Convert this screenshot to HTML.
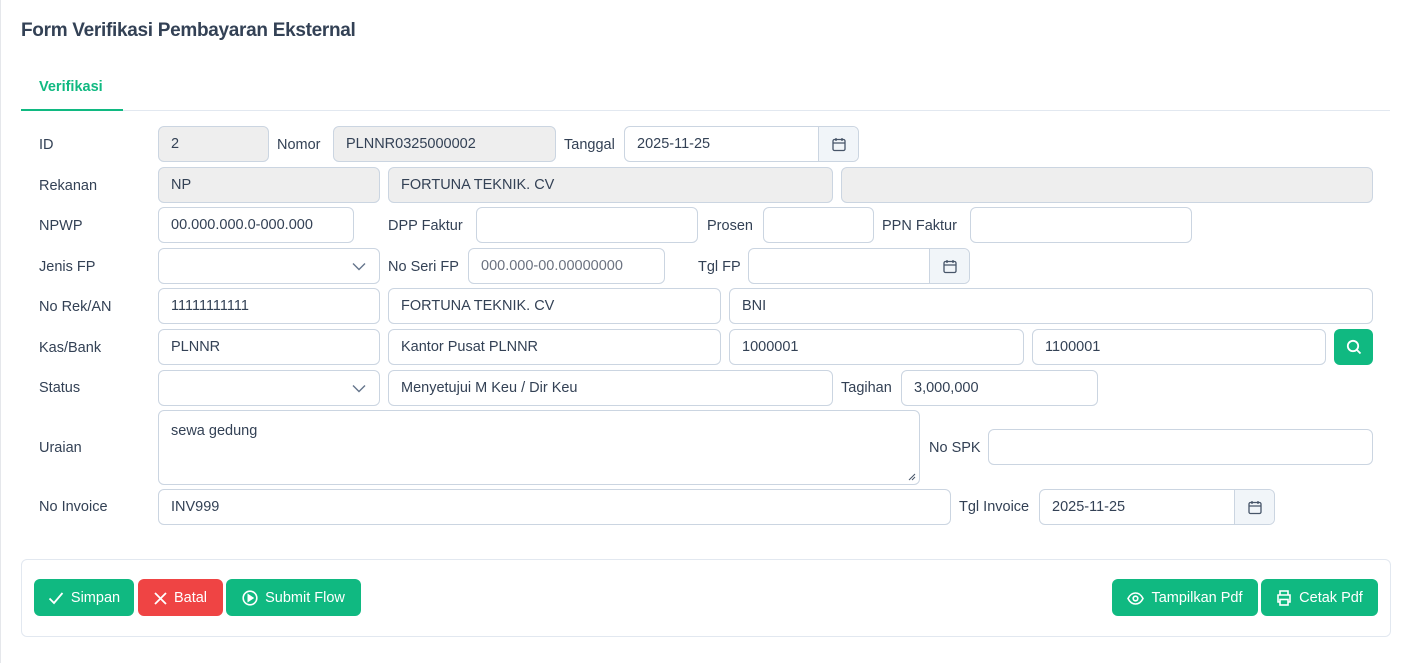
<!DOCTYPE html>
<html><head><meta charset="utf-8"><style>
*{box-sizing:border-box;margin:0;padding:0}
body{width:1401px;height:663px;background:#fff;font-family:"Liberation Sans",sans-serif;color:#334155;font-size:14.5px;position:relative;overflow:hidden}
.a{position:absolute}
.t{position:absolute;white-space:nowrap;line-height:20px}
.i{position:absolute;height:36px;border:1px solid #cbd5e1;border-radius:6px;background:#fff;padding:0 12px;line-height:35px;white-space:nowrap;color:#334155}
.d{background:#eeeeee}
.ph{color:#6b7280}
.btnc{position:absolute;top:0;right:0;width:40px;height:34px;border-left:1px solid #cbd5e1;background:#f1f5f9;border-radius:0 6px 6px 0;display:flex;align-items:center;justify-content:center}
.b{position:absolute;top:579px;height:37px;border-radius:6px;background:#10b981;color:#fff;display:flex;align-items:center;justify-content:center;gap:7px;font-size:14.5px;padding-top:1px}
</style></head><body>
<div class="a" style="left:0;top:0;width:1px;height:663px;background:#e5e7eb"></div>
<div class="t" style="left:21px;top:21px;font-size:19px;font-weight:bold;color:#334155;letter-spacing:-0.3px">Form Verifikasi Pembayaran Eksternal</div>
<div class="t" style="left:39px;top:77px;color:#10b981;font-weight:bold;font-size:14.5px">Verifikasi</div>
<div class="a" style="left:21px;top:110px;width:1369px;height:1px;background:#e2e8f0"></div>
<div class="a" style="left:21px;top:109px;width:102px;height:2px;background:#10b981"></div>

<div class="t" style="left:39px;top:135px">ID</div>
<div class="t" style="left:39px;top:176px">Rekanan</div>
<div class="t" style="left:39px;top:216px">NPWP</div>
<div class="t" style="left:39px;top:257px">Jenis FP</div>
<div class="t" style="left:39px;top:297px">No Rek/AN</div>
<div class="t" style="left:39px;top:338px">Kas/Bank</div>
<div class="t" style="left:39px;top:378px">Status</div>
<div class="t" style="left:39px;top:438px">Uraian</div>
<div class="t" style="left:39px;top:497px">No Invoice</div>

<div class="i d" style="left:158px;top:126px;width:111px">2</div>
<div class="t" style="left:277px;top:135px">Nomor</div>
<div class="i d" style="left:333px;top:126px;width:223px">PLNNR0325000002</div>
<div class="t" style="left:564px;top:135px">Tanggal</div>
<div class="i" style="left:624px;top:126px;width:235px">2025-11-25<div class="btnc"><svg width="14" height="15" viewBox="0 0 14 15" fill="none" stroke="#475569" stroke-width="1.3"><rect x="1" y="2.5" width="12" height="11" rx="1.5"/><path d="M1 6h12M4 1v3M10 1v3"/></svg></div></div>
<div class="i d" style="left:158px;top:167px;width:222px">NP</div>
<div class="i d" style="left:388px;top:167px;width:445px">FORTUNA TEKNIK. CV</div>
<div class="i d" style="left:841px;top:167px;width:532px"></div>
<div class="i" style="left:158px;top:207px;width:196px">00.000.000.0-000.000</div>
<div class="t" style="left:388px;top:216px">DPP Faktur</div>
<div class="i" style="left:476px;top:207px;width:222px"></div>
<div class="t" style="left:707px;top:216px">Prosen</div>
<div class="i" style="left:763px;top:207px;width:111px"></div>
<div class="t" style="left:882px;top:216px">PPN Faktur</div>
<div class="i" style="left:970px;top:207px;width:222px"></div>
<div class="i" style="left:158px;top:248px;width:222px"><svg class="a" style="right:13px;top:13px" width="14" height="9" viewBox="0 0 14 9" fill="none" stroke="#64748b" stroke-width="1.4"><path d="M1 1.5l6 6 6-6"/></svg></div>
<div class="t" style="left:388px;top:257px">No Seri FP</div>
<div class="i ph" style="left:468px;top:248px;width:197px">000.000-00.00000000</div>
<div class="t" style="left:698px;top:257px">Tgl FP</div>
<div class="i" style="left:748px;top:248px;width:222px"><div class="btnc"><svg width="14" height="15" viewBox="0 0 14 15" fill="none" stroke="#475569" stroke-width="1.3"><rect x="1" y="2.5" width="12" height="11" rx="1.5"/><path d="M1 6h12M4 1v3M10 1v3"/></svg></div></div>
<div class="i" style="left:158px;top:288px;width:222px">11111111111</div>
<div class="i" style="left:388px;top:288px;width:333px">FORTUNA TEKNIK. CV</div>
<div class="i" style="left:729px;top:288px;width:644px">BNI</div>
<div class="i" style="left:158px;top:329px;width:222px">PLNNR</div>
<div class="i" style="left:388px;top:329px;width:333px">Kantor Pusat PLNNR</div>
<div class="i" style="left:729px;top:329px;width:295px">1000001</div>
<div class="i" style="left:1032px;top:329px;width:294px">1100001</div>
<div class="a" style="left:1334px;top:329px;width:39px;height:36px;background:#10b981;border-radius:6px;display:flex;align-items:center;justify-content:center"><svg width="16" height="16" viewBox="0 0 16 16" fill="none" stroke="#fff" stroke-width="1.8"><circle cx="7" cy="7" r="5.2"/><path d="M11 11l3.5 3.5"/></svg></div>
<div class="i" style="left:158px;top:370px;width:222px"><svg class="a" style="right:13px;top:13px" width="14" height="9" viewBox="0 0 14 9" fill="none" stroke="#64748b" stroke-width="1.4"><path d="M1 1.5l6 6 6-6"/></svg></div>
<div class="i" style="left:388px;top:370px;width:445px">Menyetujui M Keu / Dir Keu</div>
<div class="t" style="left:841px;top:378px">Tagihan</div>
<div class="i" style="left:901px;top:370px;width:197px">3,000,000</div>
<div class="i" style="left:158px;top:410px;width:762px;height:75px;line-height:20px;padding-top:10px">sewa gedung<svg class="a" style="right:3px;bottom:3px" width="8" height="8" viewBox="0 0 8 8" stroke="#475569" stroke-width="1"><path d="M7 1L1 7M7 4L4 7"/></svg></div>
<div class="t" style="left:929px;top:438px">No SPK</div>
<div class="i" style="left:988px;top:429px;width:385px"></div>
<div class="i" style="left:158px;top:489px;width:793px">INV999</div>
<div class="t" style="left:959px;top:497px">Tgl Invoice</div>
<div class="i" style="left:1039px;top:489px;width:236px">2025-11-25<div class="btnc"><svg width="14" height="15" viewBox="0 0 14 15" fill="none" stroke="#475569" stroke-width="1.3"><rect x="1" y="2.5" width="12" height="11" rx="1.5"/><path d="M1 6h12M4 1v3M10 1v3"/></svg></div></div>

<div class="a" style="left:21px;top:559px;width:1370px;height:78px;border:1px solid #e2e8f0;border-radius:6px"></div>
<div class="b" style="left:34px;width:100px"><svg width="16" height="14" viewBox="0 0 16 14" fill="none" stroke="#fff" stroke-width="1.8"><path d="M1.5 7.5l4.5 4.5 8.5-10"/></svg>Simpan</div>
<div class="b" style="left:138px;width:85px;background:#ef4444"><svg width="13" height="13" viewBox="0 0 13 13" fill="none" stroke="#fff" stroke-width="1.8"><path d="M1 1l11 11M12 1L1 12"/></svg>Batal</div>
<div class="b" style="left:226px;width:135px"><svg width="16" height="16" viewBox="0 0 16 16" fill="none" stroke="#fff" stroke-width="1.6"><circle cx="8" cy="8" r="6.8"/><path d="M6.3 5v6l4.5-3z" fill="#fff"/></svg>Submit Flow</div>
<div class="b" style="left:1112px;width:146px"><svg width="17" height="13" viewBox="0 0 17 13" fill="none" stroke="#fff" stroke-width="1.6"><path d="M1 6.5C3 2.5 6 1 8.5 1S14 2.5 16 6.5C14 10.5 11 12 8.5 12S3 10.5 1 6.5z"/><circle cx="8.5" cy="6.5" r="2.3"/></svg>Tampilkan Pdf</div>
<div class="b" style="left:1261px;width:117px"><svg width="16" height="16" viewBox="0 0 16 16" fill="none" stroke="#fff" stroke-width="1.6"><path d="M4 5V1h8v4M4 12H2V5h12v7h-2"/><rect x="4" y="9.5" width="8" height="5.5"/></svg>Cetak Pdf</div>
</body></html>
